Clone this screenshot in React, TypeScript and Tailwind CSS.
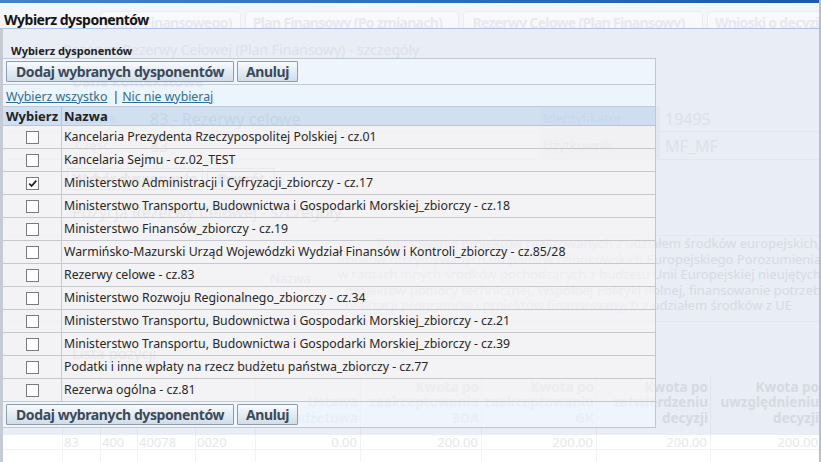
import { useState } from "react";

const DYSPONENCI = [
  "Kancelaria Prezydenta Rzeczypospolitej Polskiej - cz.01",
  "Kancelaria Sejmu - cz.02_TEST",
  "Ministerstwo Administracji i Cyfryzacji_zbiorczy - cz.17",
  "Ministerstwo Transportu, Budownictwa i Gospodarki Morskiej_zbiorczy - cz.18",
  "Ministerstwo Finansów_zbiorczy - cz.19",
  "Warmińsko-Mazurski Urząd Wojewódzki Wydział Finansów i Kontroli_zbiorczy - cz.85/28",
  "Rezerwy celowe - cz.83",
  "Ministerstwo Rozwoju Regionalnego_zbiorczy - cz.34",
  "Ministerstwo Transportu, Budownictwa i Gospodarki Morskiej_zbiorczy - cz.21",
  "Ministerstwo Transportu, Budownictwa i Gospodarki Morskiej_zbiorczy - cz.39",
  "Podatki i inne wpłaty na rzecz budżetu państwa_zbiorczy - cz.77",
  "Rezerwa ogólna - cz.81",
];

const OPIS = [
  "finansowanie projektów realizowanych z udziałem środków europejskich,",
  "środków otrzymywanych od państw członkowskich Europejskiego Porozumienia",
  "w ramach innych środków pochodzących z budżetu Unii Europejskiej nieujętych",
  "projektów pomocy technicznej, Wspólnej Polityki Rolnej, finansowanie potrzeb",
  "realizacji programów i projektów finansowanych z udziałem środków z UE",
];

// kolumny tabeli pozycji w tle: szerokość, nagłówek (linie), wartość, wyrównanie
const KOLUMNY = [
  { w: "w-[62px]", head: [] as string[], val: "", right: false },
  { w: "w-[38px]", head: [], val: "83", right: false },
  { w: "w-[37px]", head: [], val: "400", right: false },
  { w: "w-[58px]", head: [], val: "40078", right: false },
  { w: "w-[60px]", head: [], val: "0020", right: false },
  { w: "w-[105px]", head: ["Ustawa", "budżetowa"], val: "0.00", right: true },
  { w: "w-[121px]", head: ["Kwota po", "zaakceptowaniu", "3DA"], val: "200.00", right: true },
  { w: "w-[115px]", head: ["Kwota po", "zaakceptowaniu", "GK"], val: "200.00", right: true },
  { w: "w-[114px]", head: ["Kwota po", "zatwierdzeniu", "decyzji"], val: "200.00", right: true },
  { w: "w-[111px]", head: ["Kwota po", "uwzględnieniu", "decyzji"], val: "200.00", right: true },
];

const ZAKLADKA =
  "h-[17px] pt-[2px] rounded-t-[4px] border border-b-0 border-[#eaedf2] bg-[#f8f9fb] text-[14px] font-bold tracking-[-0.7px] leading-[17px] text-[#e6e9ee]";

function Przycisk({ children, px = "px-[9px]" }: { children: React.ReactNode; px?: string }) {
  return (
    <button
      className={`h-[21px] ${px} border border-[#8f9cab] rounded-[1px] bg-gradient-to-b from-[#f8fafd] to-[#d2dde8] text-[14px] font-bold tracking-[-0.4px] leading-[19px] text-[#3b4a5b] whitespace-nowrap`}
    >
      {children}
    </button>
  );
}

function Checkbox({ checked, onClick }: { checked: boolean; onClick: () => void }) {
  return (
    <span
      onClick={onClick}
      className="w-[13px] h-[13px] border border-[#7b7b7b] bg-white flex items-center justify-center"
    >
      {checked && (
        <svg width="11" height="11" viewBox="0 0 11 11">
          <path d="M2.3 5.6 L4.6 8 L9.3 2.6" fill="none" stroke="#1b1b22" strokeWidth="1.7" />
        </svg>
      )}
    </span>
  );
}

function PasekPrzyciskow({ border }: { border?: boolean }) {
  return (
    <div
      className={`flex items-center gap-[3px] pl-[3px] bg-[#f0f8ff]/70 ${border ? "h-[26px] border-b border-[#c6c9d2]" : "h-[25px]"}`}
    >
      <Przycisk>Dodaj wybranych dysponentów</Przycisk>
      <Przycisk px="px-[8px]">Anuluj</Przycisk>
    </div>
  );
}

export default function App() {
  const [zaznaczone, setZaznaczone] = useState<boolean[]>(DYSPONENCI.map((_, i) => i === 2));
  const toggle = (i: number) => setZaznaczone((z) => z.map((v, j) => (j === i ? !v : v)));

  return (
    <div className="relative w-[821px] h-[462px] overflow-hidden bg-white font-['Noto_Sans',sans-serif]">
      {/* Strona w tle (wyblakła pod oknem modalnym) */}
      <div className="flex flex-col h-full">
        <div className="h-[3px] bg-gradient-to-r from-[#4583c7] via-[#2b70bb] to-[#1b5ba8]" />

        {/* Zakładki */}
        <div className="h-[25px] bg-[#f3f5f9] flex items-end gap-[4px] pl-[100px] whitespace-nowrap">
          <div className={`${ZAKLADKA} w-[141px] pr-[8px] text-right`}>Planu Finansowego)</div>
          <div className={`${ZAKLADKA} w-[215px] pl-[7px]`}>Plan Finansowy (Po zmianach)</div>
          <div className={`${ZAKLADKA} w-[240px] pl-[8px]`}>Rezerwy Celowe (Plan Finansowy)</div>
          <div className={`${ZAKLADKA} w-[114px] pl-[7px]`}>Wnioski o decyzje</div>
        </div>
        <div className="h-px bg-[#a8c7e6]" />

        <div className="h-[406px] bg-[#e9edf5] flex flex-col whitespace-nowrap">
          <div className="mt-[11px] h-[20px] pl-[63px] text-[14px] leading-[20px] text-[#dde1e9]">
            Rezerwa Rezerwy Celowej (Plan Finansowy) - szczegóły
          </div>
          <div className="mt-[12px] h-[20px] pl-[72px] text-[14px] font-bold leading-[20px] text-[#c4c9d2]">
            Dane kontekstowe
          </div>

          {/* Dane kontekstowe */}
          <div className="mt-[14px] flex flex-col">
            <div className="h-[26px] flex items-center border-b border-[#e2e6ee]">
              <div className="w-[145px] pl-[75px] text-[13px] text-[#c9ced7]">Nazwa</div>
              <div className="w-[395px] pl-[5px] text-[16px] text-[#c4c9d2]">83 - Rezerwy celowe</div>
              <div className="w-[120px] h-full flex items-center pl-[3px] bg-[#e4e8f0] text-[13px] text-[#cdd2da]">Identyfikator</div>
              <div className="pl-[5px] text-[16px] text-[#dde1e8]">19495</div>
            </div>
            <div className="h-[28px] flex items-center border-b border-[#e2e6ee]">
              <div className="w-[145px] pl-[75px] text-[13px] text-[#c9ced7]">Część</div>
              <div className="w-[395px] pl-[5px] text-[16px] text-[#c4c9d2]">83</div>
              <div className="w-[120px] h-full flex items-center pl-[3px] bg-[#e4e8f0] text-[13px] text-[#cdd2da]">Użytkownik</div>
              <div className="pl-[5px] text-[16px] text-[#dde1e8]">MF_MF</div>
            </div>
          </div>

          <div className="mt-[8px] h-[22px] flex gap-[4px] pl-[67px]">
            <div className="w-[136px] border border-[#cdd2da] text-center text-[14px] font-bold tracking-[-0.4px] leading-[20px] text-[#c4c9d2]">Wybór dysponenta</div>
            <div className="w-[68px] border border-[#cdd2da] text-center text-[14px] font-bold tracking-[-0.4px] leading-[20px] text-[#c4c9d2]">Powrót</div>
          </div>

          <div className="mt-[12px] h-[20px] pl-[72px] text-[16px] leading-[20px] text-[#c4c9d2]">
            Pozycja Rezerwy Celowej - szczegóły
          </div>

          {/* Opis pozycji */}
          <div className="mt-[13px] h-[87px] flex border-y border-[#e2e6ee]">
            <div className="w-[338px] pl-[270px] flex items-center text-[13px] text-[#c9ced7]">Nazwa</div>
            <div className="flex-1 flex flex-col overflow-hidden text-[13px] leading-[15.5px] text-[#d6dbe3]">
              {OPIS.map((l, i) => (
                <div key={i} className={`flex justify-end ${i === 4 ? "pr-[29px]" : ""}`}>
                  <span>{l}</span>
                </div>
              ))}
            </div>
          </div>

          <div className="mt-[21px] h-[20px] pl-[72px] text-[15px] leading-[20px] text-[#c4c9d2]">Lista pozycji</div>

          {/* Nagłówek tabeli pozycji */}
          <div className="mt-[14px] h-[58px] flex">
            {KOLUMNY.map((k, i) => (
              <div
                key={i}
                className={`${k.w} shrink-0 flex flex-col justify-end pb-[9px] border-l border-[#e0e4ec] text-[13.5px] font-bold leading-[15.5px] text-[#d5dae2] ${k.right ? "items-end pr-[2px]" : "items-start pl-[1px]"}`}
              >
                {k.head.map((h) => (
                  <span key={h}>{h}</span>
                ))}
              </div>
            ))}
          </div>
        </div>

        {/* Wiersz tabeli pozycji */}
        <div className="flex h-[15px] border-b border-[#f2f2f4] whitespace-nowrap">
          {KOLUMNY.map((k, i) => (
            <div
              key={i}
              className={`${k.w} shrink-0 border-l border-[#f2f3f5] text-[13px] leading-[15px] text-[#e6e7ea] ${k.right ? "text-right pr-[3px]" : "pl-[1px]"}`}
            >
              {k.val}
            </div>
          ))}
        </div>
        <div className="flex-1 flex">
          {KOLUMNY.map((k, i) => (
            <div key={i} className={`${k.w} shrink-0 border-l border-[#f4f4f6]`} />
          ))}
        </div>
      </div>

      {/* Okno modalne */}
      <div className="absolute inset-0 flex flex-col border-r-[2px] border-[#b9bec8]">
        <div className="h-[29px] pt-[10px] pl-[4px] text-[14px] font-bold tracking-[-0.5px] leading-[19px] text-[#141414]">
          Wybierz dysponentów
        </div>
        <div className="flex-1 flex flex-col border-l-[3px] border-[#c6cad3]">
          <div className="h-[29px] flex items-end pl-[8px] text-[11px] font-bold leading-[14px] text-[#222]">
            Wybierz dysponentów
          </div>

          <div className="w-[653px] border-t border-r border-b border-[#c3c7d0] flex flex-col">
            <PasekPrzyciskow border />

            <div className="h-[22px] flex pl-[3px] pt-[1px] bg-[#edf6ff]/70 border-b border-[#c3c8d2] text-[12.3px] leading-[21px]">
              <a className="text-[#2a6f95] underline cursor-pointer" onClick={() => setZaznaczone(DYSPONENCI.map(() => true))}>
                Wybierz wszystko
              </a>
              <span className="ml-[5px] mr-[3px] text-[#333]">|</span>
              <a className="text-[#2a6f95] underline cursor-pointer" onClick={() => setZaznaczone(DYSPONENCI.map(() => false))}>
                Nic nie wybieraj
              </a>
            </div>

            <div className="h-[19px] flex bg-[#c4daef]/70 border-b border-[#bcc4cf] text-[13px] font-bold leading-[18px] text-[#222]">
              <div className="w-[59px] pl-[3px] border-r border-[#b9c5d3]">Wybierz</div>
              <div className="pl-[2px]">Nazwa</div>
            </div>

            {DYSPONENCI.map((nazwa, i) => (
              <div key={i} className="h-[23px] flex bg-[#f6f4f4]/70 border-b border-[#c6c8d0]">
                <div className="w-[59px] flex items-center justify-center border-r border-[#c8cad2]">
                  <Checkbox checked={zaznaczone[i]} onClick={() => toggle(i)} />
                </div>
                <div className="pl-[2px] text-[12.3px] leading-[22px] text-[#282828] whitespace-nowrap">{nazwa}</div>
              </div>
            ))}

            <PasekPrzyciskow />
          </div>
        </div>
      </div>
    </div>
  );
}
